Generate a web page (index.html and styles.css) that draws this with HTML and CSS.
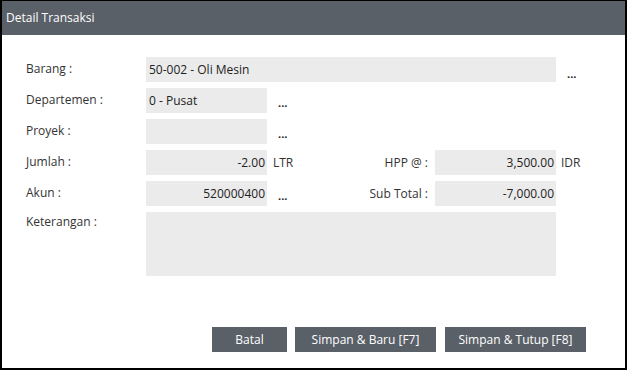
FILE: index.html
```html
<!DOCTYPE html>
<html lang="id">
<head>
  <meta charset="UTF-8">
  <title>Detail Transaksi</title>
  <link rel="stylesheet" href="styles.css">
</head>
<body>
  <div class="dialog">
    <div class="title">Detail Transaksi</div>
    <div class="form">
      <label class="lbl">Barang :</label>
      <div class="field wide">50-002 - Oli Mesin</div>
      <span class="dots">...</span>

      <label class="lbl">Departemen :</label>
      <div class="field">0 - Pusat</div>
      <div class="mid"><span class="dots">...</span></div>

      <label class="lbl">Proyek :</label>
      <div class="field"></div>
      <div class="mid"><span class="dots">...</span></div>

      <label class="lbl">Jumlah :</label>
      <div class="field num">-2.00</div>
      <div class="mid"><span class="unit">LTR</span><span class="rlbl">HPP @ :</span></div>
      <div class="field num right">3,500.00</div>
      <span class="suffix">IDR</span>

      <label class="lbl">Akun :</label>
      <div class="field num">520000400</div>
      <div class="mid"><span class="dots">...</span><span class="rlbl">Sub Total :</span></div>
      <div class="field num right">-7,000.00</div>

      <label class="lbl top">Keterangan :</label>
      <div class="field wide area"></div>
    </div>
    <div class="actions">
      <button class="btn small">Batal</button>
      <button class="btn">Simpan &amp; Baru [F7]</button>
      <button class="btn">Simpan &amp; Tutup [F8]</button>
    </div>
  </div>
</body>
</html>
```

FILE: styles.css
```css
html, body {
  margin: 0;
  padding: 0;
  background: #fff;
}
body {
  font-family: "Open Sans", "Noto Sans", sans-serif;
  font-size: 12px;
  color: #333;
}
.dialog {
  box-sizing: border-box;
  width: 627px;
  height: 370px;
  border: 2px solid #000;
  border-top-width: 1px;
  display: flex;
  flex-direction: column;
}
.title {
  height: 34px;
  line-height: 33px;
  padding-left: 4px;
  background: #5a6068;
  color: #fff;
}
.form {
  display: grid;
  grid-template-columns: 120px 121px 168px 121px 40px;
  grid-auto-rows: 25px;
  row-gap: 6px;
  padding: 22px 0 0 24px;
}
.lbl {
  grid-column: 1;
  line-height: 24px;
  white-space: nowrap;
}
.lbl.top {
  align-self: start;
  margin-top: -2px;
}
.field {
  grid-column: 2;
  background: #ebebeb;
  line-height: 25px;
  padding: 0 3px;
  white-space: nowrap;
  color: #222;
}
.field.wide {
  grid-column: 2 / 5;
}
.field.right {
  grid-column: 4;
}
.field.num {
  text-align: right;
  padding: 0 2px 0 0;
}
.field.area {
  grid-row: span 2;
  height: 64px;
}
.mid {
  grid-column: 3;
  display: flex;
  justify-content: space-between;
  align-items: center;
  padding-right: 7px;
}
.dots {
  font-weight: bold;
  font-size: 11px;
  line-height: 25px;
  padding-top: 4px;
  margin-left: 11px;
  color: #222;
}
.unit {
  margin-left: 6px;
}
.rlbl {
  margin-left: auto;
}
.suffix {
  grid-column: 5;
  line-height: 25px;
  margin-left: 5px;
}
.actions {
  margin-top: auto;
  margin-bottom: 16px;
  display: flex;
  justify-content: flex-end;
  gap: 8px;
  padding-right: 39px;
}
.actions .btn:last-child {
  margin-left: 1px;
}
.btn {
  width: 141px;
  height: 25px;
  border: 0;
  padding: 0;
  background: #5a6068;
  color: #fff;
  font-family: inherit;
  font-size: 12px;
}
.btn.small {
  width: 75px;
}
```
